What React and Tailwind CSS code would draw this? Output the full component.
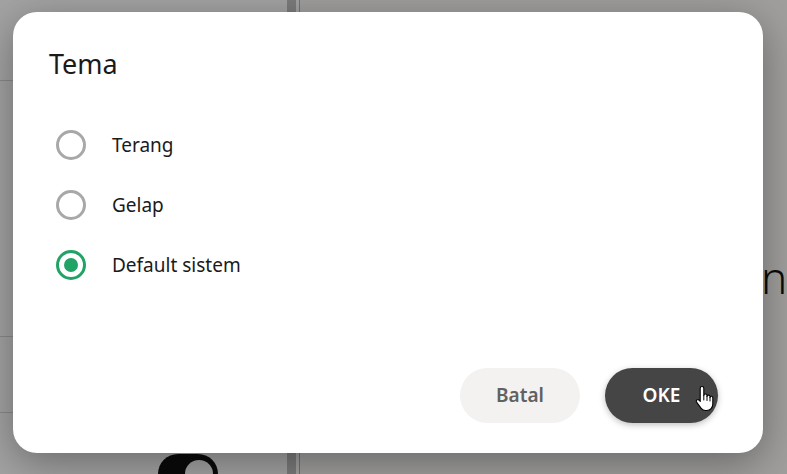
import React from 'react';

const options = [
  { id: 'light', label: 'Terang' },
  { id: 'dark', label: 'Gelap' },
  { id: 'system', label: 'Default sistem' },
];

const Radio = ({ checked }) => (
  <span
    className={`flex h-[30px] w-[30px] shrink-0 items-center justify-center rounded-full border-[3px] ${
      checked ? 'border-[#21a366]' : 'border-[#a8a8a8] border-[2.5px]'
    }`}
  >
    {checked && <span className="h-[14px] w-[14px] rounded-full bg-[#21a366]" />}
  </span>
);

const HandCursor = () => (
  <svg width="22" height="28" viewBox="0 0 22 28" className="pointer-events-none absolute left-[695px] top-[385px]">
    <path
      d="M7 1.5c1 0 1.8.8 1.8 1.8V10.5c0-.9.7-1.5 1.6-1.5s1.6.6 1.6 1.5v1c0-.9.7-1.4 1.5-1.4s1.5.6 1.5 1.4v1c0-.8.7-1.3 1.4-1.3s1.4.6 1.4 1.3V19c0 3.5-2.5 6.5-6 6.5H10.5c-2 0-3.2-.8-4.3-2.2L1.6 17.2c-.6-.8-.4-1.8.4-2.3.8-.5 1.8-.3 2.4.4L5.2 16.5V3.3C5.2 2.3 6 1.5 7 1.5Z"
      fill="#fff"
      stroke="#000"
      strokeWidth="1.1"
      strokeLinejoin="round"
    />
    <path d="M8.8 10.5v4.5M12 11.5v4M15 12.5v3.5" stroke="#000" strokeWidth="1" strokeLinecap="round" />
  </svg>
);

export default function App() {
  return (
    <div
      className="relative h-[474px] w-[787px] overflow-hidden"
      style={{ fontFamily: '"Segoe UI", "Noto Sans", "Open Sans", sans-serif' }}
    >
      {/* page behind the dialog */}
      <div className="flex h-full w-full bg-white">
        <div className="flex w-[287px] shrink-0 flex-col overflow-hidden bg-white">
          <div className="h-[81px] shrink-0 border-b border-[#d8d8d8]" />
          <div className="h-[256px] shrink-0 border-b border-[#d8d8d8]" />
          <div className="h-[76px] shrink-0 border-b border-[#d8d8d8]" />
          <div className="flex shrink-0 pl-[158px] pt-[41px]">
            <span className="flex h-[40px] w-[60px] items-center justify-end rounded-full bg-[#111] pr-[5px]">
              <span className="h-[28px] w-[28px] rounded-full bg-white" />
            </span>
          </div>
        </div>
        <div className="w-[9px] shrink-0 bg-[#c2c2c2]" />
        <div className="w-[3px] shrink-0 bg-white" />
        <div className="w-px shrink-0 bg-[#b5b5b5]" />
        <div className="min-w-0 flex-1 overflow-hidden whitespace-nowrap bg-[#faf9f7] pl-[461px] pt-[255px]">
          <span className="text-[44px] font-light leading-none text-[#111]">n</span>
        </div>
      </div>

      {/* scrim */}
      <div className="absolute inset-0 bg-black/[0.36]" />

      {/* dialog */}
      <div className="absolute left-[13px] top-[12px] flex h-[441px] w-[750px] flex-col rounded-[24px] bg-white pb-[30px] pl-[36px] pr-[45px] pt-[34px] shadow-[0_10px_40px_rgba(0,0,0,0.35)]">
        <h2 className="text-[27px] leading-[36px] text-[#1a1a1a]">Tema</h2>
        <div className="mt-[48px] flex flex-col gap-[30px] pl-[7px]">
          {options.map((o) => (
            <label key={o.id} className="flex h-[30px] items-center gap-[26px]">
              <Radio checked={o.id === 'system'} />
              <span className="text-[19px] text-[#1a1a1a]">{o.label}</span>
            </label>
          ))}
        </div>
        <div className="mt-auto flex justify-end gap-[25px]">
          <button className="h-[55px] w-[120px] rounded-full bg-[#f3f2f1] text-[19px] font-semibold text-[#616161]">
            Batal
          </button>
          <button className="h-[55px] w-[113px] rounded-full bg-[#454545] text-[19px] font-semibold text-white shadow-[0_2px_6px_rgba(0,0,0,0.25)]">
            OKE
          </button>
        </div>
      </div>

      <HandCursor />
    </div>
  );
}
